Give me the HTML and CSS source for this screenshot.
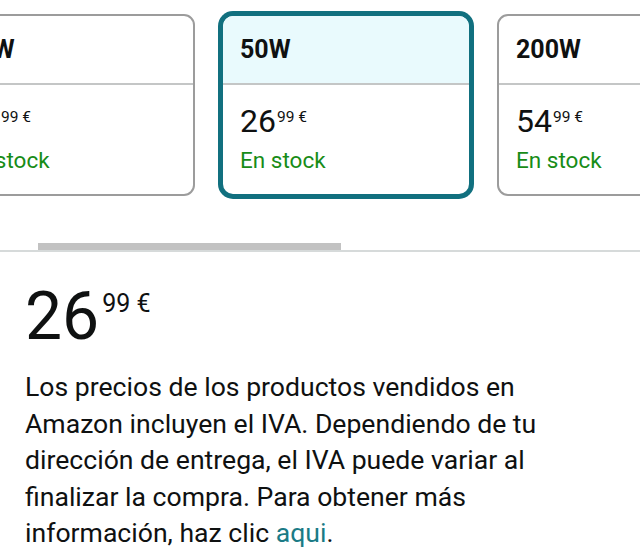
FILE: index.html
```html
<!DOCTYPE html>
<html lang="es">
<head>
<meta charset="utf-8">
<title>Precio</title>
<link rel="stylesheet" href="styles.css">
</head>
<body>
<div class="carousel">
  <div class="track">
    <div class="card">
      <div class="card-head">25W</div>
      <div class="card-body">
        <div class="price"><span class="whole">19</span><span class="frac">99 €</span></div>
        <div class="stock">En stock</div>
      </div>
    </div>
    <div class="card selected">
      <div class="card-head">50W</div>
      <div class="card-body">
        <div class="price"><span class="whole">26</span><span class="frac">99 €</span></div>
        <div class="stock">En stock</div>
      </div>
    </div>
    <div class="card">
      <div class="card-head">200W</div>
      <div class="card-body">
        <div class="price"><span class="whole">54</span><span class="frac">99 €</span></div>
        <div class="stock">En stock</div>
      </div>
    </div>
  </div>
  <div class="scrollbar">
    <div class="thumb"></div>
    <div class="rail"></div>
  </div>
</div>
<div class="details">
  <div class="big-price"><span class="big-whole">26</span><span class="big-frac">99 €</span></div>
  <p class="note">Los precios de los productos vendidos en Amazon incluyen el IVA. Dependiendo de tu dirección de entrega, el IVA puede variar al finalizar la compra. Para obtener más información, haz clic <a href="#" class="link">aqui</a>.</p>
</div>
</body>
</html>
```
FILE: styles.css
```css
html, body {
  margin: 0;
  padding: 0;
  background: #ffffff;
  overflow: hidden;
}
body {
  width: 640px;
  height: 557px;
  font-family: Roboto, "Liberation Sans", sans-serif;
  color: #0f1111;
}
.carousel {
  overflow: hidden;
  padding-top: 14px;
}
.track {
  display: flex;
  gap: 26px;
  margin-left: -55px;
  padding-bottom: 4px;
}
.card {
  flex: 0 0 250px;
  box-sizing: border-box;
  height: 182px;
  border: 2px solid #9c9c9c;
  border-radius: 11px;
  display: flex;
  flex-direction: column;
  overflow: hidden;
  background: #fff;
}
.card.selected {
  border-color: #11707f;
  box-shadow: 0 0 0 3px #11707f;
  border-radius: 12px;
}
.card-head {
  height: 67px;
  display: flex;
  align-items: center;
  padding-left: 17px;
  font-size: 25px;
  font-weight: 700;
  line-height: 29px;
  border-bottom: 2px solid #c4c6c6;
}
.card.selected .card-head {
  background: #e9fafd;
}
.card-body {
  padding: 17px 0 0 17px;
  display: flex;
  flex-direction: column;
  gap: 7px;
}
.price {
  display: flex;
  align-items: flex-start;
  height: 38px;
}
.whole {
  font-size: 32px;
  line-height: 38px;
}
.frac {
  font-size: 15.5px;
  line-height: 15px;
  margin-top: 8px;
  margin-left: 1px;
}
.stock {
  font-size: 22.5px;
  line-height: 26px;
  color: #178c17;
}
.scrollbar {
  margin-top: 43px;
  display: flex;
  flex-direction: column;
}
.thumb {
  margin-left: 38px;
  width: 303px;
  height: 7px;
  background: #c2c2c2;
}
.rail {
  height: 2px;
  background: #d6dada;
}
.details {
  padding: 32px 0 0 25px;
}
.big-price {
  display: flex;
  align-items: flex-start;
  height: 66px;
}
.big-whole {
  font-size: 66px;
  line-height: 66px;
}
.big-frac {
  font-size: 25px;
  line-height: 25px;
  margin-top: 7px;
  margin-left: 3px;
}
.note {
  margin: 19px 0 0;
  max-width: 555px;
  font-size: 26.6px;
  line-height: 36.6px;
}
.link {
  color: #1b7b86;
  text-decoration: none;
}
```
